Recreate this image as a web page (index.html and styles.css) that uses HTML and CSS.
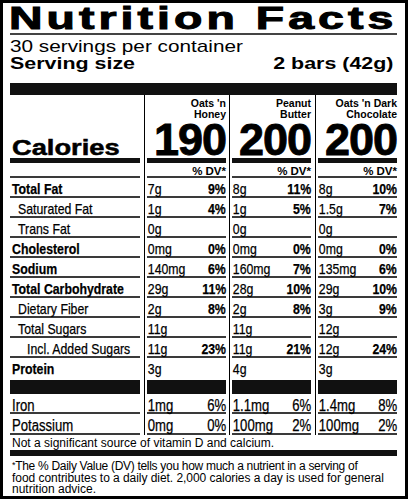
FILE: index.html
```html
<!DOCTYPE html>
<html lang="en">
<head>
    <meta charset="UTF-8">
    <meta name="viewport" content="width=device-width, initial-scale=1.0">
    <title>Nutrition Facts</title>
    <link rel="stylesheet" href="styles.css">
</head>
<body>

<div class="label">
    <div class="title"><span>Nutrition Facts</span></div>
    <div class="servings"><span>30 servings per container</span></div>
    <div class="serving-size">
        <span class="left">Serving size</span>
        <span class="right">2 bars (42g)</span>
    </div>
    <div class="bar-top"></div>

    <div class="table">
        <div class="col names">
            <div class="head"><span class="calories">Calories</span></div>
            <div class="thick"></div>
            <div class="dv"></div>
            <div class="row bold"><span>Total Fat</span></div>
            <div class="row sub"><span>Saturated Fat</span></div>
            <div class="row sub"><span>Trans Fat</span></div>
            <div class="row bold"><span>Cholesterol</span></div>
            <div class="row bold"><span>Sodium</span></div>
            <div class="row bold"><span>Total Carbohydrate</span></div>
            <div class="row sub"><span>Dietary Fiber</span></div>
            <div class="row sub"><span>Total Sugars</span></div>
            <div class="row subsub"><span>Incl. Added Sugars</span></div>
            <div class="row last bold"><span>Protein</span></div>
            <div class="block"></div>
            <div class="row mineral"><span>Iron</span></div>
            <div class="row mineral tall"><span>Potassium</span></div>
        </div>

        <div class="col val c1">
            <div class="head">
                <div class="prod">Oats 'n<br>Honey</div>
                <div class="cal">190</div>
            </div>
            <div class="thick"></div>
            <div class="dv">% DV*</div>
            <div class="row"><span>7g</span><b>9%</b></div>
            <div class="row"><span>1g</span><b>4%</b></div>
            <div class="row"><span>0g</span></div>
            <div class="row"><span>0mg</span><b>0%</b></div>
            <div class="row"><span>140mg</span><b>6%</b></div>
            <div class="row"><span>29g</span><b>11%</b></div>
            <div class="row"><span>2g</span><b>8%</b></div>
            <div class="row"><span>11g</span></div>
            <div class="row"><span>11g</span><b>23%</b></div>
            <div class="row last"><span>3g</span></div>
            <div class="block"></div>
            <div class="row mineral"><span>1mg</span><i>6%</i></div>
            <div class="row mineral tall"><span>0mg</span><i>0%</i></div>
        </div>

        <div class="col val c2">
            <div class="head">
                <div class="prod">Peanut<br>Butter</div>
                <div class="cal">200</div>
            </div>
            <div class="thick"></div>
            <div class="dv">% DV*</div>
            <div class="row"><span>8g</span><b>11%</b></div>
            <div class="row"><span>1g</span><b>5%</b></div>
            <div class="row"><span>0g</span></div>
            <div class="row"><span>0mg</span><b>0%</b></div>
            <div class="row"><span>160mg</span><b>7%</b></div>
            <div class="row"><span>28g</span><b>10%</b></div>
            <div class="row"><span>2g</span><b>8%</b></div>
            <div class="row"><span>11g</span></div>
            <div class="row"><span>11g</span><b>21%</b></div>
            <div class="row last"><span>4g</span></div>
            <div class="block"></div>
            <div class="row mineral"><span>1.1mg</span><i>6%</i></div>
            <div class="row mineral tall"><span>100mg</span><i>2%</i></div>
        </div>

        <div class="col val c3">
            <div class="head">
                <div class="prod">Oats 'n Dark<br>Chocolate</div>
                <div class="cal">200</div>
            </div>
            <div class="thick"></div>
            <div class="dv">% DV*</div>
            <div class="row"><span>8g</span><b>10%</b></div>
            <div class="row"><span>1.5g</span><b>7%</b></div>
            <div class="row"><span>0g</span></div>
            <div class="row"><span>0mg</span><b>0%</b></div>
            <div class="row"><span>135mg</span><b>6%</b></div>
            <div class="row"><span>29g</span><b>10%</b></div>
            <div class="row"><span>3g</span><b>9%</b></div>
            <div class="row"><span>12g</span></div>
            <div class="row"><span>12g</span><b>24%</b></div>
            <div class="row last"><span>3g</span></div>
            <div class="block"></div>
            <div class="row mineral"><span>1.4mg</span><i>8%</i></div>
            <div class="row mineral tall"><span>100mg</span><i>2%</i></div>
        </div>
    </div>

    <div class="note">Not a significant source of vitamin D and calcium.</div>
    <div class="bar-bottom"></div>
    <div class="footnote">
        <div class="line-1"><span class="star">*</span>The % Daily Value (DV) tells you how much a nutrient in a serving of</div>
        <div class="line-2">food contributes to a daily diet. 2,000 calories a day is used for general</div>
        <div>nutrition advice.</div>
    </div>
</div>

</body>
</html>
```

FILE: styles.css
```css
body {
    margin: 0;
    font-family: "Liberation Sans", Arial, sans-serif;
    color: #000;
    background-color: #fff;
}
.label {
    width: 408px;
    height: 499px;
    box-sizing: border-box;
    border: 3px solid #000;
    padding: 0 8px 0 7px;
    overflow: hidden;
}
.title {
    height: 30px;
    line-height: 30px;
    font-size: 32px;
    font-weight: bold;
    border-bottom: 2px solid #444;
    white-space: nowrap;
}
.title span {
    display: inline-block;
    transform: scaleX(1.45);
    transform-origin: left;
    letter-spacing: 2.8px;
    -webkit-text-stroke: 1px #000;
    margin-left: -1px;
}
.servings {
    margin-top: 3px;
    font-size: 17px;
    line-height: 18px;
    white-space: nowrap;
}
.servings span {
    display: inline-block;
    transform: scaleX(1.22);
    transform-origin: left;
}
.serving-size {
    display: flex;
    justify-content: space-between;
    font-size: 17px;
    line-height: 15px;
    font-weight: bold;
    white-space: nowrap;
}
.serving-size .left {
    display: inline-block;
    transform: scaleX(1.26);
    transform-origin: left;
}
.serving-size .right {
    display: inline-block;
    transform: scaleX(1.26);
    transform-origin: right;
    margin-right: 4px;
}
.bar-top {
    margin-top: 12px;
    height: 12px;
    background-color: #111;
}

/* nutrient table */
.table {
    display: flex;
}
.col {
    display: flex;
    flex-direction: column;
    box-sizing: border-box;
}
.names {
    width: 134px;
    padding-right: 4px;
}
.val {
    border-left: 1px solid #000;
    padding: 0 3px 0 2px;
}
.c1 { width: 85px; }
.c2 { width: 86px; padding-right: 4px; }
.c3 { width: 82px; padding-right: 0; }

.head {
    height: 63px;
    display: flex;
    flex-direction: column;
    justify-content: space-between;
}
.names .head {
    justify-content: flex-end;
}
.calories {
    display: inline-block;
    font-size: 22px;
    line-height: 20px;
    font-weight: bold;
    transform: scaleX(1.24);
    transform-origin: left;
    -webkit-text-stroke: 0.5px #000;
    margin-left: 2px;
}
.prod {
    padding-top: 3px;
    font-size: 10.5px;
    line-height: 11px;
    font-weight: bold;
    text-align: right;
}
.cal {
    font-size: 45px;
    line-height: 36px;
    font-weight: bold;
    text-align: right;
    letter-spacing: -1px;
    -webkit-text-stroke: 0.9px #000;
}
.thick {
    height: 5px;
    background-color: #111;
}
.dv {
    height: 15px;
    box-sizing: border-box;
    border-bottom: 2px solid #3a3a3a;
    padding-top: 2px;
    font-size: 11.5px;
    line-height: 12px;
    font-weight: bold;
    text-align: right;
}
.row {
    height: 20px;
    box-sizing: border-box;
    border-bottom: 2px solid #3a3a3a;
    padding-top: 4px;
    font-size: 15px;
    line-height: 14px;
    display: flex;
    justify-content: space-between;
    white-space: nowrap;
}
/* no condensed face installed, so squeeze the row text */
.row span,
.row b,
.row i {
    display: inline-block;
    transform: scaleX(0.82);
    transform-origin: left;
    -webkit-text-stroke: 0.25px #000;
}
.row b,
.row i {
    transform-origin: right;
    font-style: normal;
}
.val .row span {
    padding-left: 1px;
}
.row b {
    font-weight: bold;
}
.row.last {
    height: 22px;
    border-bottom: none;
}
.names .row { padding-left: 2px; }
.names .row.sub { padding-left: 8px; }
.names .row.subsub { padding-left: 17px; }
.bold { font-weight: bold; }
.block {
    height: 14px;
    background-color: #111;
}
.row.mineral {
    font-size: 16px;
    line-height: 16px;
}
.row.tall {
    height: 21px;
}

.note {
    margin-top: 1px;
    height: 14px;
    padding-left: 2px;
    font-size: 12px;
    line-height: 14px;
}
.bar-bottom {
    height: 6px;
    background-color: #111;
}
.footnote {
    margin-top: 4px;
    padding-left: 2px;
    font-size: 12px;
    line-height: 11.5px;
    white-space: nowrap;
}
.line-1 {
    letter-spacing: -0.3px;
}
.line-2 {
    letter-spacing: -0.05px;
}
.star {
    font-size: 9px;
    vertical-align: 2px;
}
```
